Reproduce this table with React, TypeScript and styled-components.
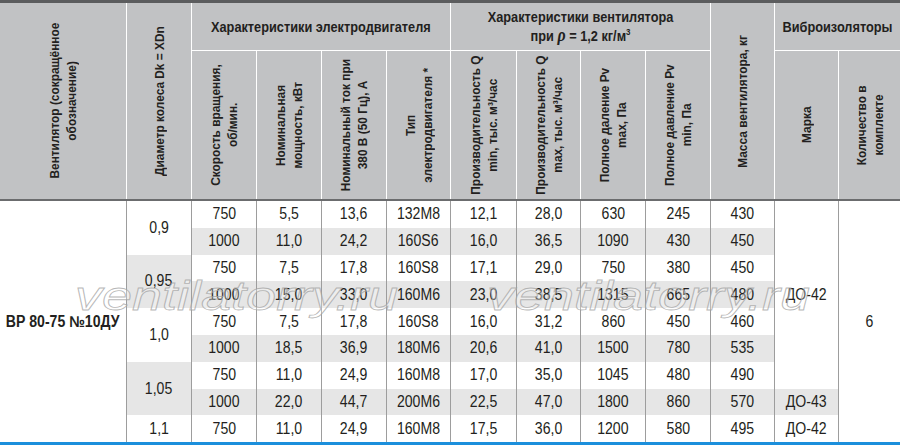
import { Fragment, ReactNode } from "react";
import styled, { createGlobalStyle } from "styled-components";

const GlobalStyle = createGlobalStyle`
  html, body {
    margin: 0;
    padding: 0;
    background: #fff;
  }
  body {
    font-family: "Liberation Sans", Arial, sans-serif;
    color: #231f20;
  }
`;

const columns = "126px 64px 64px 64px 64px 63px 65px 63px 64px 64px 63px 63px 61px";

const motorRows = [
  ["750", "5,5", "13,6", "132M8", "12,1", "28,0", "630", "245", "430"],
  ["1000", "11,0", "24,2", "160S6", "16,0", "36,5", "1090", "430", "450"],
  ["750", "7,5", "17,8", "160S8", "17,1", "29,0", "750", "380", "450"],
  ["1000", "15,0", "33,0", "160M6", "23,0", "38,5", "1315", "665", "480"],
  ["750", "7,5", "17,8", "160S8", "16,0", "31,2", "860", "450", "460"],
  ["1000", "18,5", "36,9", "180M6", "20,6", "41,0", "1500", "780", "535"],
  ["750", "11,0", "24,9", "160M8", "17,0", "35,0", "1045", "480", "490"],
  ["1000", "22,0", "44,7", "200M6", "22,5", "47,0", "1800", "860", "570"],
  ["750", "11,0", "24,9", "160M8", "17,5", "36,0", "1200", "580", "495"],
];

// cells that start on a given row and span several rows
const diameters: Record<number, { value: string; rows: number; shade: boolean }> = {
  0: { value: "0,9", rows: 2, shade: false },
  2: { value: "0,95", rows: 2, shade: true },
  4: { value: "1,0", rows: 2, shade: false },
  6: { value: "1,05", rows: 2, shade: true },
  8: { value: "1,1", rows: 1, shade: false },
};

const marks: Record<number, { value: string; rows: number; shade: boolean }> = {
  0: { value: "ДО-42", rows: 7, shade: false },
  7: { value: "ДО-43", rows: 1, shade: true },
  8: { value: "ДО-42", rows: 1, shade: false },
};

const Page = styled.div`
  position: relative;
  width: 900px;
  height: 445px;
  overflow: hidden;
`;

const Header = styled.div`
  display: grid;
  grid-template-columns: ${columns};
  grid-template-rows: 47px 148px;
  gap: 1px;
  background: #fff;
  border-top: 3px solid #5b5c5e;
  border-bottom: 2px solid #6b6c6e;
`;

const HeadCell = styled.div<{ $rows?: number; $cols?: number }>`
  grid-row: span ${(p) => p.$rows ?? 1};
  grid-column: span ${(p) => p.$cols ?? 1};
  background: #c1c2c4;
  display: flex;
  align-items: center;
  justify-content: center;
  text-align: center;
  font-weight: bold;
  font-size: 14.5px;
  line-height: 18px;
  overflow: hidden;
`;

// condensed look: the installed sans has no narrow cut
const Narrow = styled.span`
  display: inline-block;
  white-space: nowrap;
  transform: scaleX(0.88);
`;

const Rotated = styled.span`
  writing-mode: vertical-rl;
  transform: rotate(180deg) scaleY(0.88);
  text-align: center;
  white-space: nowrap;
  font-size: 13.5px;
  line-height: 17px;
`;

const Rho = styled.span`
  font-family: "Liberation Serif", serif;
  font-style: italic;
  font-size: 18px;
`;

const Sup = styled.sup`
  font-size: 9px;
  line-height: 0;
`;

const Body = styled.div`
  display: grid;
  grid-template-columns: ${columns};
  grid-auto-rows: 26.8px;
  column-gap: 1px;
  background: #9d9d9d;
`;

const Cell = styled.div<{ $rows?: number; $shade?: boolean; $bold?: boolean }>`
  grid-row: span ${(p) => p.$rows ?? 1};
  background: ${(p) => (p.$shade ? "#e6e6e6" : "#fff")};
  display: flex;
  align-items: center;
  justify-content: center;
  font-size: 16px;
  font-weight: ${(p) => (p.$bold ? "bold" : "normal")};
  overflow: hidden;
`;

const BlueBar = styled.div`
  height: 3px;
  background: #1b8fdc;
`;

const Watermark = styled.span<{ $left: number }>`
  position: absolute;
  top: 276px;
  left: ${(p) => p.$left}px;
  font-family: "Liberation Sans", sans-serif;
  font-style: italic;
  font-size: 40px;
  line-height: 40px;
  color: rgba(255, 255, 255, 0.3);
  -webkit-text-stroke: 0.8px rgba(160, 160, 160, 0.75);
  transform: scaleX(1.35);
  transform-origin: left center;
  pointer-events: none;
  white-space: nowrap;
`;

function Label({ lines }: { lines: string[] }) {
  return (
    <Rotated>
      {lines.map((line, i) => (
        <Fragment key={i}>
          {i > 0 && <br />}
          {line}
        </Fragment>
      ))}
    </Rotated>
  );
}

function Value({ children }: { children: ReactNode }) {
  return <Narrow>{children}</Narrow>;
}

export default function App() {
  return (
    <>
      <GlobalStyle />
      <Page>
        <Header>
          <HeadCell $rows={2}>
            <Label lines={["Вентилятор (сокращённое", "обозначение)"]} />
          </HeadCell>
          <HeadCell $rows={2}>
            <Label lines={["Диаметр колеса Dk = XDn"]} />
          </HeadCell>
          <HeadCell $cols={4}>
            <Value>Характеристики электродвигателя</Value>
          </HeadCell>
          <HeadCell $cols={4}>
            <Value>
              Характеристики вентилятора
              <br />
              при <Rho>ρ</Rho> = 1,2 кг/м<Sup>3</Sup>
            </Value>
          </HeadCell>
          <HeadCell $rows={2}>
            <Label lines={["Масса вентилятора, кг"]} />
          </HeadCell>
          <HeadCell $cols={2}>
            <Value>Виброизоляторы</Value>
          </HeadCell>

          <HeadCell>
            <Label lines={["Скорость вращения,", "об/мин."]} />
          </HeadCell>
          <HeadCell>
            <Label lines={["Номинальная", "мощность,  кВт"]} />
          </HeadCell>
          <HeadCell>
            <Label lines={["Номинальный ток при", "380  В (50 Гц), А"]} />
          </HeadCell>
          <HeadCell>
            <Label lines={["Тип", "электродвигателя *"]} />
          </HeadCell>
          <HeadCell>
            <Label lines={["Производительность Q", "min, тыс. м³/час"]} />
          </HeadCell>
          <HeadCell>
            <Label lines={["Производительность Q", "max, тыс. м³/час"]} />
          </HeadCell>
          <HeadCell>
            <Label lines={["Полное даление Pv", "max, Па"]} />
          </HeadCell>
          <HeadCell>
            <Label lines={["Полное давление Pv", "min, Па"]} />
          </HeadCell>
          <HeadCell>
            <Label lines={["Марка"]} />
          </HeadCell>
          <HeadCell>
            <Label lines={["Количество в", "комплекте"]} />
          </HeadCell>
        </Header>

        <Body>
          {motorRows.map((row, r) => (
            <Fragment key={r}>
              {r === 0 && (
                <Cell $rows={9} $bold>
                  <Value>ВР 80-75 №10ДУ</Value>
                </Cell>
              )}
              {diameters[r] && (
                <Cell $rows={diameters[r].rows} $shade={diameters[r].shade}>
                  <Value>{diameters[r].value}</Value>
                </Cell>
              )}
              {row.map((value, c) => (
                <Cell key={c} $shade={r % 2 === 1}>
                  <Value>{value}</Value>
                </Cell>
              ))}
              {marks[r] && (
                <Cell $rows={marks[r].rows} $shade={marks[r].shade}>
                  <Value>{marks[r].value}</Value>
                </Cell>
              )}
              {r === 0 && (
                <Cell $rows={9}>
                  <Value>6</Value>
                </Cell>
              )}
            </Fragment>
          ))}
        </Body>
        <BlueBar />

        <Watermark $left={75}>ventilatorry.ru</Watermark>
        <Watermark $left={487}>ventilatorry.ru</Watermark>
      </Page>
    </>
  );
}
